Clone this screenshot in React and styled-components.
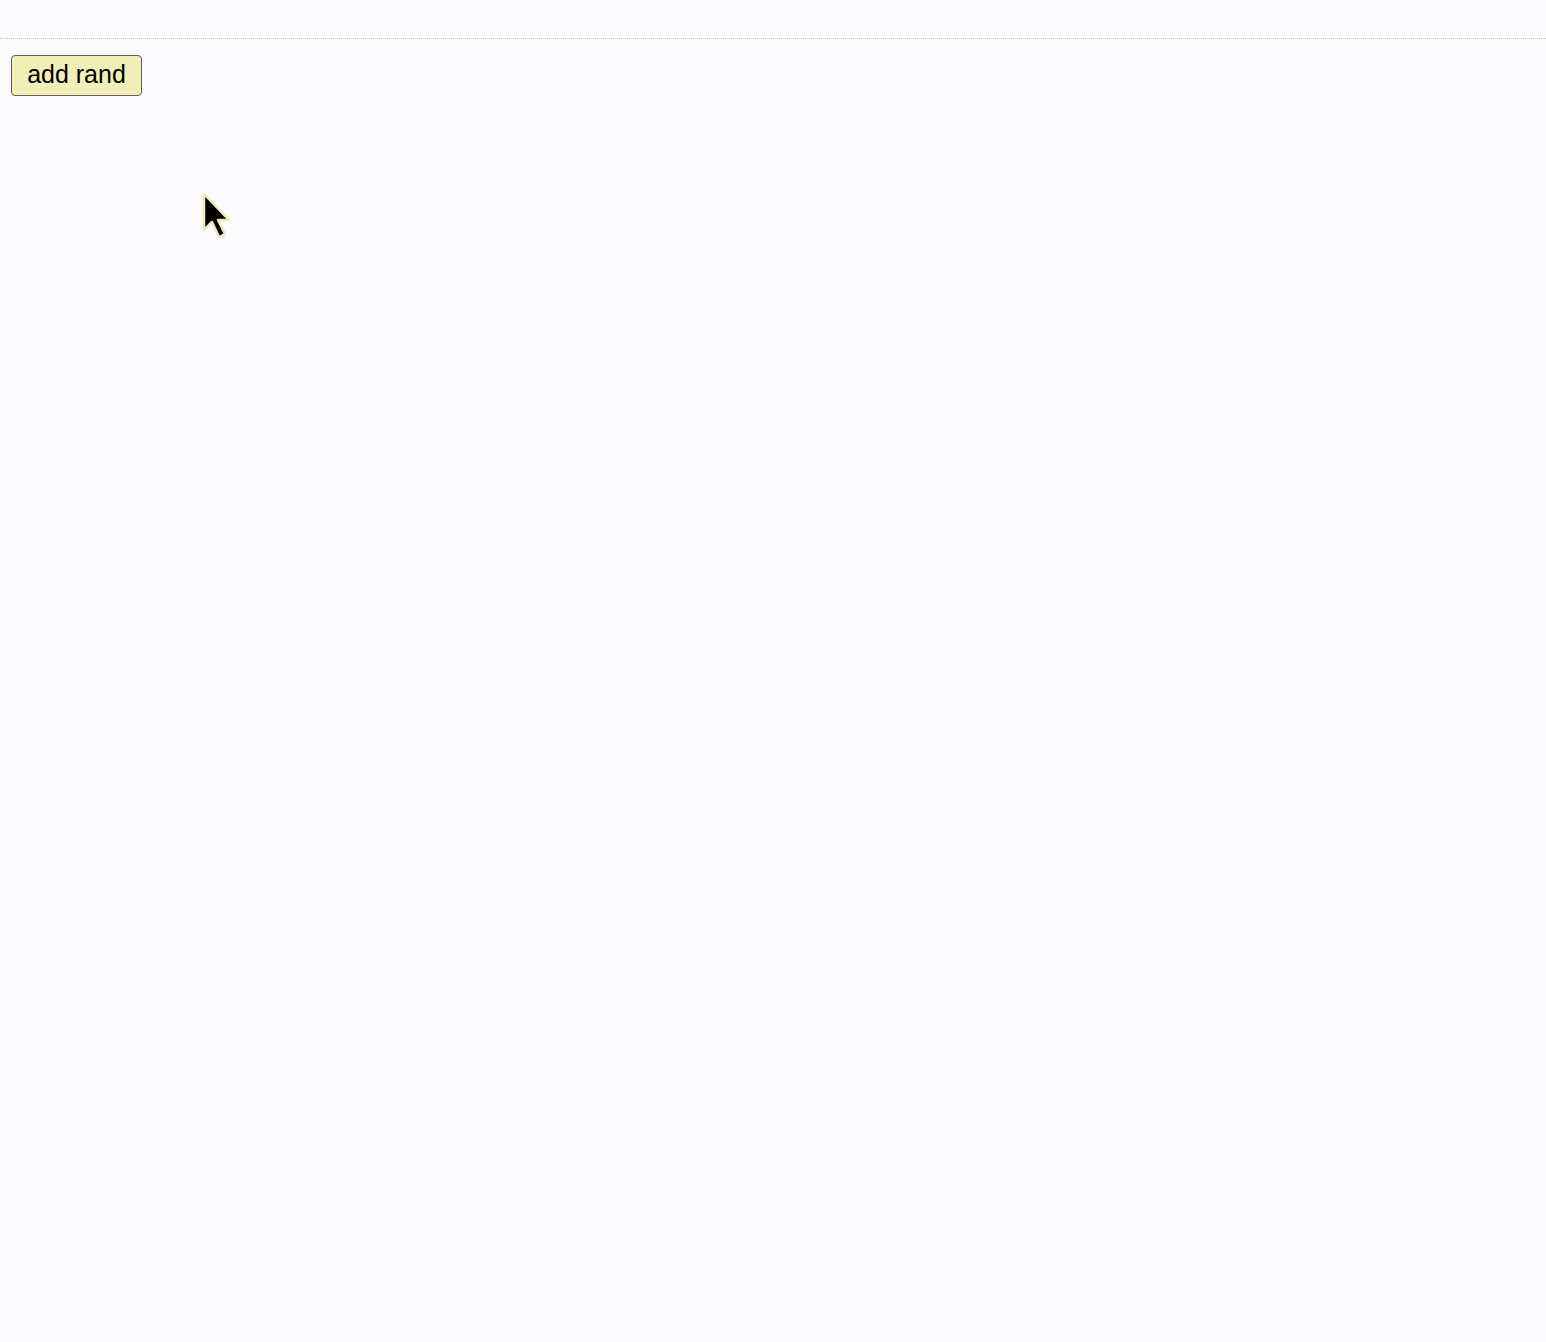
import styled, { createGlobalStyle } from "styled-components";

const GlobalStyle = createGlobalStyle`
  html, body {
    margin: 0;
    padding: 0;
    background: #fbfbfd;
    font-family: "Liberation Sans", Arial, sans-serif;
  }
`;

const Page = styled.div`
  position: relative;
  min-height: 1342px;
  background: #fbfbfd;
`;

const TopBar = styled.div`
  height: 38px;
  border-bottom: 1px dotted #cfcf9a;
`;

const Controls = styled.div`
  display: flex;
  padding: 16px 11px;
`;

const Button = styled.button`
  height: 41px;
  width: 131px;
  padding: 0 0 3px;
  font-family: "Liberation Sans", Arial, sans-serif;
  font-size: 25px;
  color: #000;
  background: #f1eeb8;
  border: 1px solid #5f5f5f;
  border-radius: 4px;
  cursor: pointer;
`;

const Cursor = styled.svg`
  position: absolute;
  left: 199px;
  top: 191px;
`;

const App = () => {
  return (
    <Page>
      <GlobalStyle />
      <TopBar />
      <Controls>
        <Button>add rand</Button>
      </Controls>
      <Cursor width="40" height="56" viewBox="0 0 40 56">
        <path
          d="M5 3 L5 39 L13 31 L20 46 L26 43 L19 29 L30 29 Z"
          fill="#000"
          stroke="#efeab8"
          strokeWidth="2.5"
          strokeLinejoin="round"
        />
      </Cursor>
    </Page>
  );
};

export default App;
